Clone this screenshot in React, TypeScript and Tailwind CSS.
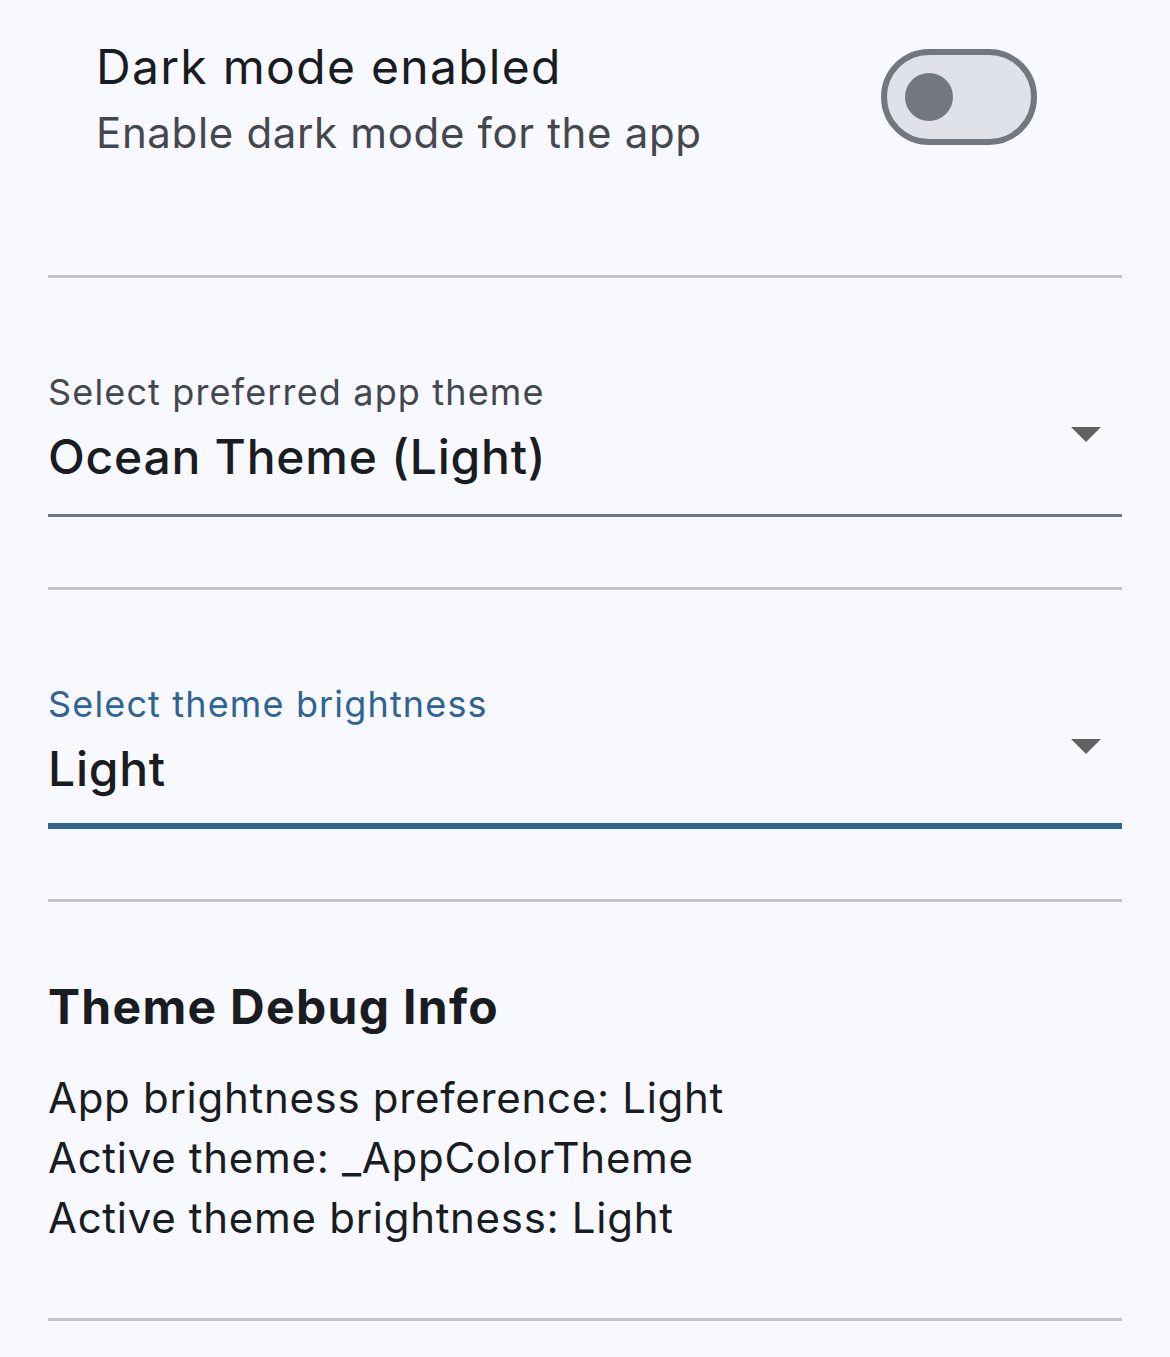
import { useState } from 'react'

function Divider() {
  return <div className="h-[3px] w-full bg-[#c4c6cf]" />
}

function DropArrow() {
  return (
    <svg width="30" height="15" viewBox="0 0 30 15" className="mt-[6px] mr-[21px] shrink-0">
      <path d="M0 0 L30 0 L15 15 Z" fill="#616161" />
    </svg>
  )
}

function Dropdown({ label, value, focused }: { label: string; value: string; focused?: boolean }) {
  return (
    <div className="pt-[90px]">
      <div
        className={
          'text-[36px] leading-[48px] tracking-[1.15px] ' + (focused ? 'text-[#2f6393]' : 'text-[#44474e]')
        }
      >
        {label}
      </div>
      <div className="mt-[5px] flex items-start justify-between">
        <span className="text-[48px] leading-[72px] font-medium tracking-[0.75px] text-[#191c20]">{value}</span>
        <DropArrow />
      </div>
      {focused ? (
        <div className="mt-[18px] h-[6px] w-full bg-[#2f6393]" />
      ) : (
        <div className="mt-[21px] h-[3px] w-full bg-[#73777f]" />
      )}
      <div className="mt-[70px]">
        <Divider />
      </div>
    </div>
  )
}

export default function App() {
  const [dark, setDark] = useState(false)

  return (
    <div
      className="min-h-[1357px] w-full bg-[#f8f9ff] px-[48px] text-[#191c20]"
      style={{ fontFamily: 'Inter, "Noto Sans", sans-serif' }}
    >
      {/* dark mode tile */}
      <div className="flex h-[194px] items-center justify-between pl-[48px] pr-[85px]">
        <div>
          <div className="text-[48px] leading-[72px] tracking-[1.3px] text-[#191c20]">Dark mode enabled</div>
          <div className="text-[42px] leading-[60px] tracking-[0.65px] text-[#44474e]">
            Enable dark mode for the app
          </div>
        </div>
        <button
          type="button"
          onClick={() => setDark(!dark)}
          className="flex h-[96px] w-[156px] items-center rounded-full border-[6px] border-[#73777f] bg-[#e0e2ea] pl-[18px]"
        >
          <span className="h-[48px] w-[48px] rounded-full bg-[#73777f]" />
        </button>
      </div>
      <div className="mt-[81px]">
        <Divider />
      </div>

      <Dropdown label="Select preferred app theme" value="Ocean Theme (Light)" />
      <Dropdown label="Select theme brightness" value="Light" focused />

      {/* debug info */}
      <div className="pt-[69px]">
        <div className="text-[48px] leading-[72px] font-bold tracking-[1.3px] text-[#191c20]">Theme Debug Info</div>
        <div className="mt-[25px] text-[42px] leading-[60px] tracking-[0.7px] text-[#191c20]">
          <div>App brightness preference: Light</div>
          <div>Active theme: _AppColorTheme</div>
          <div>Active theme brightness: Light</div>
        </div>
        <div className="mt-[70px]">
          <Divider />
        </div>
      </div>
    </div>
  )
}
